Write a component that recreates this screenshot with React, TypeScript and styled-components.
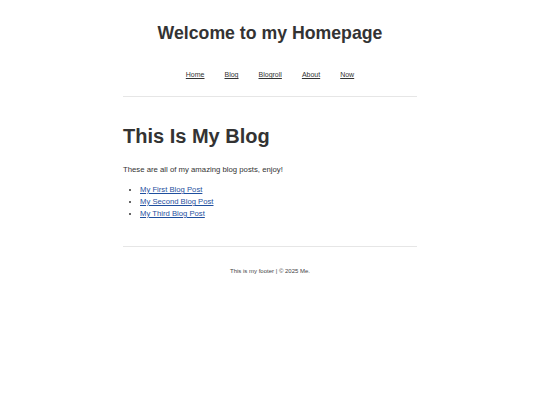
import styled, { createGlobalStyle } from 'styled-components'

const GlobalStyle = createGlobalStyle`
  html, body {
    margin: 0;
    padding: 0;
    background: #ffffff;
  }
  body {
    font-family: "Liberation Sans", Arial, sans-serif;
    color: #333333;
  }
`

const StyledPage = styled.div`
  width: 294px;
  margin: 0 auto;
`

const StyledHeader = styled.header`
  display: flex;
  flex-direction: column;
  align-items: center;
  padding-top: 22px;
  border-bottom: 1px solid #e6e6e6;
`

const StyledSiteTitle = styled.h1`
  margin: 0;
  font-size: 17.7px;
  line-height: 22px;
  font-weight: 700;
  color: #333333;
`

const StyledNav = styled.nav`
  display: flex;
  gap: 20px;
  padding: 26px 0 17px;
`

const StyledNavLink = styled.a`
  font-size: 7px;
  line-height: 9px;
  color: #333333;
  text-decoration: underline;
`

const StyledMain = styled.main`
  padding: 26px 0 26px;
  border-bottom: 1px solid #e6e6e6;
`

const StyledPageTitle = styled.h2`
  margin: 0;
  font-size: 20px;
  line-height: 26px;
  font-weight: 700;
  color: #333333;
`

const StyledIntro = styled.p`
  margin: 15px 0 8px;
  font-size: 7.75px;
  line-height: 12px;
`

const StyledList = styled.ul`
  margin: 0;
  padding-left: 17px;
`

const StyledItem = styled.li`
  font-size: 7.7px;
  line-height: 12px;
`

const StyledPostLink = styled.a`
  color: #1f4f9e;
  text-decoration: underline;
`

const StyledFooter = styled.footer`
  padding-top: 20px;
  text-align: center;
  font-size: 6px;
  line-height: 8px;
  color: #444444;
`

const navItems = ['Home', 'Blog', 'Blogroll', 'About', 'Now']
const posts = ['My First Blog Post', 'My Second Blog Post', 'My Third Blog Post']

const App = () => {
  return (
    <>
      <GlobalStyle />
      <StyledPage>
        <StyledHeader>
          <StyledSiteTitle>Welcome to my Homepage</StyledSiteTitle>
          <StyledNav>
            {navItems.map((item) => (
              <StyledNavLink key={item} href="#">
                {item}
              </StyledNavLink>
            ))}
          </StyledNav>
        </StyledHeader>
        <StyledMain>
          <StyledPageTitle>This Is My Blog</StyledPageTitle>
          <StyledIntro>These are all of my amazing blog posts, enjoy!</StyledIntro>
          <StyledList>
            {posts.map((post) => (
              <StyledItem key={post}>
                <StyledPostLink href="#">{post}</StyledPostLink>
              </StyledItem>
            ))}
          </StyledList>
        </StyledMain>
        <StyledFooter>This is my footer | © 2025 Me.</StyledFooter>
      </StyledPage>
    </>
  )
}

export default App
